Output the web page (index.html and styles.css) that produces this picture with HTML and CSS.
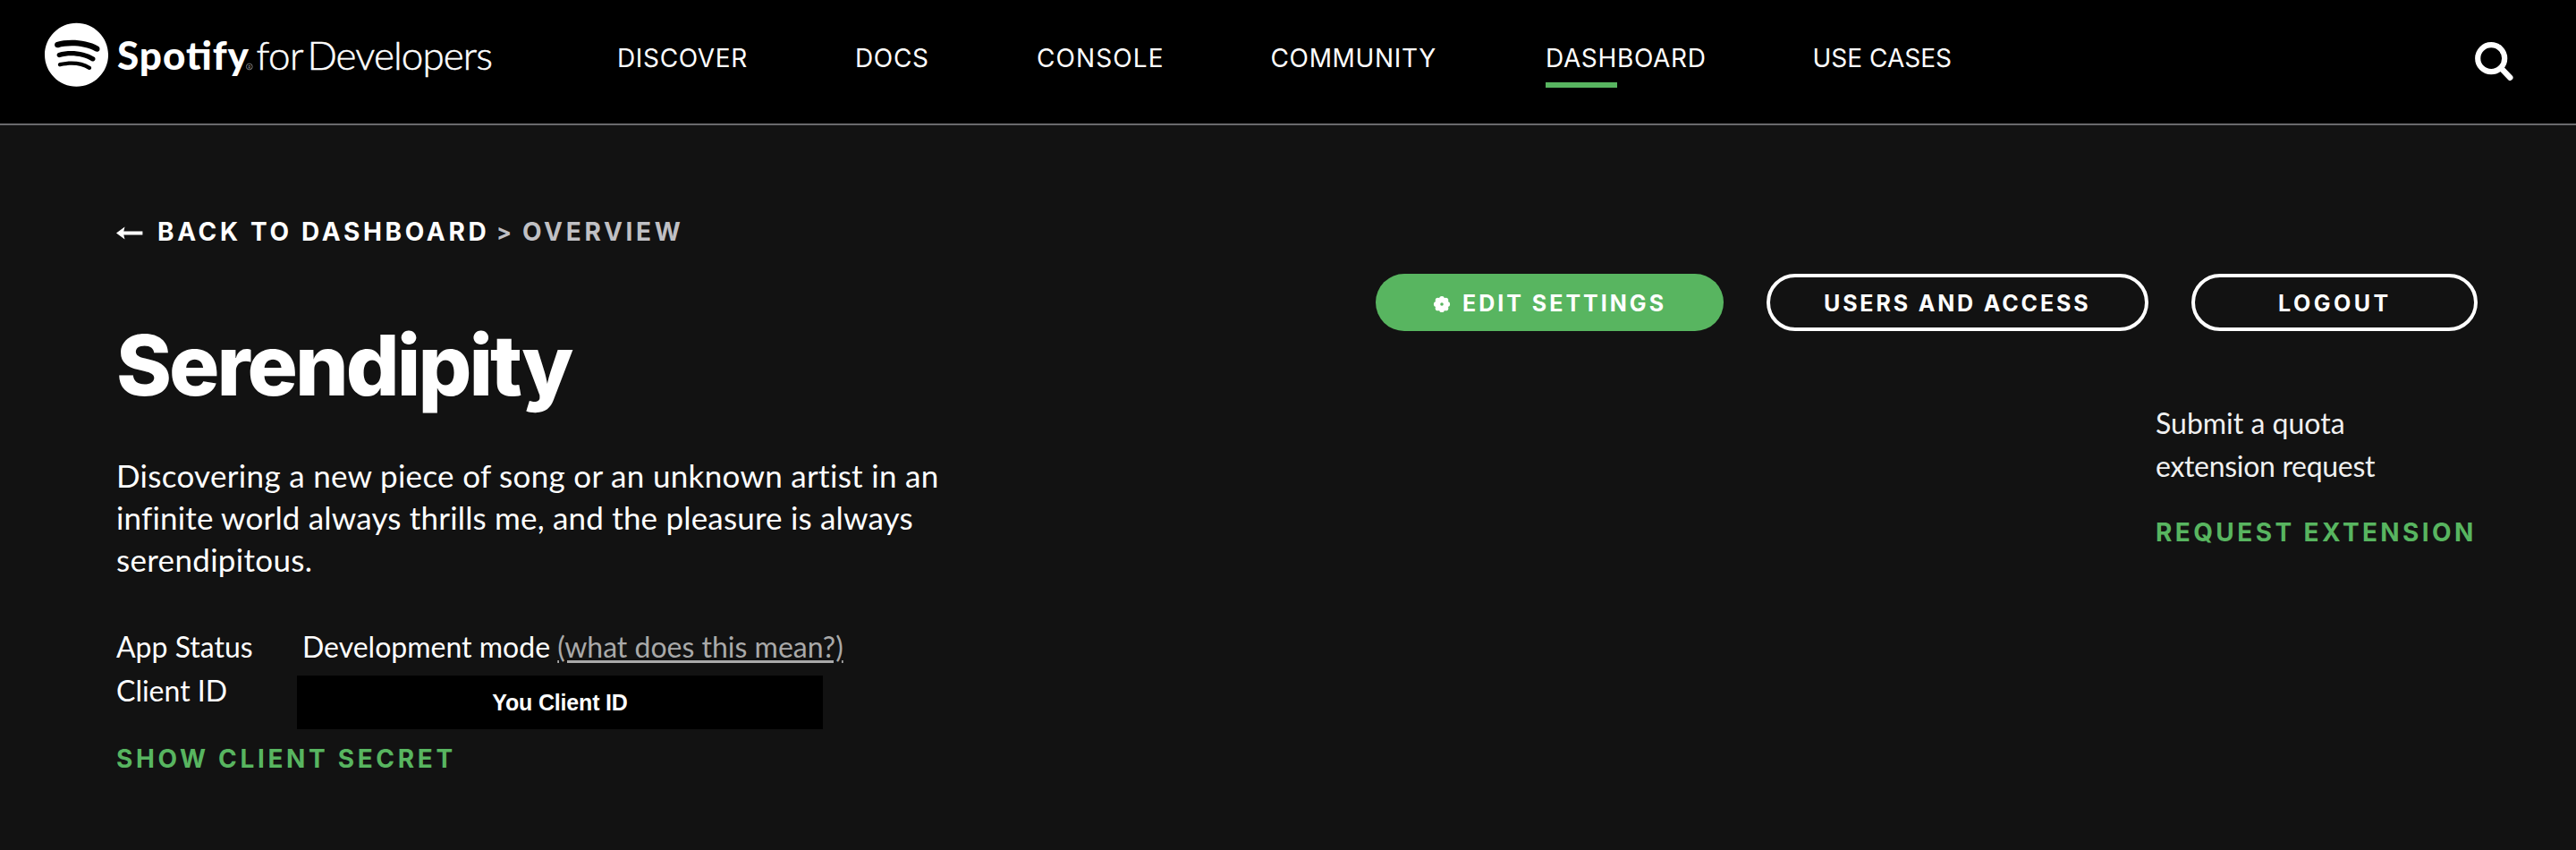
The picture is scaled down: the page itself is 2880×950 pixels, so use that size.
FILE: index.html
```html
<!DOCTYPE html>
<html lang="en">
<head>
<meta charset="utf-8">
<title>Serendipity - Spotify for Developers</title>
<link rel="stylesheet" href="styles.css">
</head>
<body>
<header class="header">
  <a class="logo">
    <svg width="510" height="76" viewBox="0 0 510 76">
      <circle cx="35.4" cy="35.5" r="30" fill="#000"/>
      <path transform="translate(0 .7) scale(2.96)" fill="#fff" d="M12 0C5.4 0 0 5.4 0 12s5.4 12 12 12 12-5.4 12-12S18.66 0 12 0zm5.521 17.34c-.24.359-.66.48-1.021.24-2.82-1.74-6.36-2.101-10.561-1.141-.418.122-.779-.179-.899-.539-.12-.421.18-.78.54-.9 4.56-1.021 8.52-.6 11.64 1.32.42.18.479.659.301 1.02zm1.44-3.3c-.301.42-.841.6-1.262.3-3.239-1.98-8.159-2.58-11.939-1.38-.479.12-1.02-.12-1.14-.6-.12-.48.12-1.021.6-1.141C9.6 9.9 15 10.561 18.72 12.84c.361.181.54.78.241 1.2zm.12-3.36C15.24 8.4 8.82 8.16 5.16 9.301c-.6.179-1.2-.181-1.38-.721-.18-.601.18-1.2.72-1.381 4.26-1.26 11.28-1.02 15.721 1.621.539.3.719 1.02.419 1.56-.299.421-1.02.599-1.559.3z"/>
      <text class="logo-bold" x="81" y="53" textLength="147">Spotify</text>
      <circle cx="228.8" cy="49.5" r="3.4" fill="none" stroke="#777" stroke-width="1"/>
      <text class="logo-reg" x="227.2" y="51.7">R</text>
      <text class="logo-light" x="236.6" y="53" textLength="53">for</text>
      <text class="logo-light" x="293.4" y="53" textLength="207.5">Developers</text>
    </svg>
  </a>
  <nav class="nav">
    <a class="nav-item">DISCOVER</a>
    <a class="nav-item">DOCS</a>
    <a class="nav-item nav-wide">CONSOLE</a>
    <a class="nav-item">COMMUNITY</a>
    <a class="nav-item active">DASHBOARD</a>
    <a class="nav-item nav-tight">USE CASES</a>
  </nav>
  <svg class="search" width="44" height="44" viewBox="0 0 44 44" fill="none" stroke="#fff">
    <circle cx="18.2" cy="18.2" r="15" stroke-width="6.2"/>
    <path d="M29 29l10.3 10.8" stroke-width="6.4" stroke-linecap="round"/>
  </svg>
</header>
<main class="main">
  <section class="details">
    <div class="crumbs">
      <svg class="arrow" width="30" height="16" viewBox="0 0 30 16" fill="#fff"><path d="M0 8.5L9.5 1.5 8.3 6.5H29.4V10.5H8.3L9.5 15.5z"/></svg>
      <a class="crumb-back">BACK TO DASHBOARD</a>
      <span class="crumb-sep">&gt;</span>
      <span class="crumb-here">OVERVIEW</span>
    </div>
    <h1 class="title">Serendipity</h1>
    <p class="desc">Discovering a new piece of song or an unknown artist in an<br><span class="desc-tight">infinite world always thrills me, and the pleasure is always</span><br>serendipitous.</p>
    <dl class="facts">
      <dt>App Status</dt>
      <dd class="mode">Development mode <a class="what">(what does this mean?)</a></dd>
      <dt>Client ID</dt>
      <dd class="client-id">You Client ID</dd>
    </dl>
    <a class="link secret">SHOW CLIENT SECRET</a>
  </section>
  <aside class="side">
    <div class="buttons">
      <a class="btn btn-green">
        <svg class="gear" width="20" height="20" viewBox="-10 -10 20 20">
          <g fill="#fff"><circle r="7"/><circle cy="-6.2" r="2.9"/><circle cy="6.2" r="2.9"/><circle cx="-6.2" r="2.9"/><circle cx="6.2" r="2.9"/><circle cx="4.4" cy="4.4" r="2.9"/><circle cx="-4.4" cy="4.4" r="2.9"/><circle cx="4.4" cy="-4.4" r="2.9"/><circle cx="-4.4" cy="-4.4" r="2.9"/></g>
          <circle r="1.8" fill="#58b560"/>
        </svg>
        <span>EDIT SETTINGS</span>
      </a>
      <a class="btn btn-users">USERS AND ACCESS</a>
      <a class="btn btn-logout">LOGOUT</a>
    </div>
    <div class="quota">
      <p class="quota-text">Submit a quota<br><span class="quota-second">extension request</span></p>
      <a class="link request">REQUEST EXTENSION</a>
    </div>
  </aside>
</main>
</body>
</html>
```
FILE: styles.css
```css
* { box-sizing: border-box; }
body {
  margin: 0;
  height: 950px;
  background: #121212;
  color: #fff;
  font-family: Lato, "Liberation Sans", sans-serif;
  font-size: 32px;
}
h1, p, dl, dd { margin: 0; }

.header {
  display: flex;
  align-items: flex-start;
  height: 140px;
  padding-left: 50px;
  padding-right: 69px;
  background: #000;
  border-bottom: 2px solid #6a6a6c;
}
.logo { width: 640px; padding-top: 25px; }
.logo svg { display: block; }
.logo text { fill: #fff; font-family: Lato, sans-serif; font-size: 44px; }
.logo .logo-bold { font-weight: 900; }
.logo .logo-light { font-weight: 300; stroke: #fff; stroke-width: .5px; }
.logo .logo-reg { font-size: 5px; fill: #999; }

.nav {
  display: grid;
  grid-template-columns: 266px 203px 261.5px 307.5px 298.5px 200px;
  padding-top: 48px;
  font: 28px/34px Inter, sans-serif;
  letter-spacing: .65px;
}
.nav-wide { letter-spacing: 1.1px; }
.nav-tight { letter-spacing: 0; }
.active::after {
  content: "";
  display: block;
  width: 80px;
  height: 6px;
  margin-top: 10px;
  background: #58b560;
}
.search { margin-left: auto; margin-top: 46.5px; }

.main {
  display: flex;
  justify-content: space-between;
  padding-left: 130px;
  padding-right: 110px;
}
.details { padding-top: 102px; }
.crumbs {
  display: flex;
  align-items: center;
  height: 34px;
  font: 700 28px/34px Inter, sans-serif;
  letter-spacing: 3.67px;
}
.arrow { margin-top: 2px; }
.crumb-back { width: 379px; margin-left: 16px; }
.crumb-sep { width: 29px; color: #c0c0c4; font-size: 25px; }
.crumb-here { color: #c0c0c4; }
.title {
  margin-top: 74px;
  font: 800 94px/116px Inter, sans-serif;
  letter-spacing: -2.95px;
}
.desc {
  margin-top: 42px;
  font-size: 35px;
  line-height: 47px;
  letter-spacing: .31px;
}
.desc-tight { letter-spacing: .18px; }
.facts {
  display: grid;
  grid-template-columns: 202px auto;
  justify-content: start;
  margin-top: 49px;
  line-height: 49px;
}
.facts dt { height: 49px; }
.mode { padding-left: 6px; }
.what {
  color: #a9a9a9;
  text-decoration: underline;
  text-decoration-thickness: 3px;
  text-underline-offset: 3px;
}
.client-id {
  width: 588px;
  height: 60px;
  margin-top: 8px;
  background: #000;
  text-align: center;
  font: 700 25px/60px "Liberation Sans", sans-serif;
  letter-spacing: -.17px;
}
.link {
  display: block;
  font: 700 28px/34px Inter, sans-serif;
  color: #58b560;
}
.secret { margin-top: 16px; letter-spacing: 3.65px; }

.side { width: 1232px; padding-top: 166px; }
.buttons { display: flex; gap: 48px; }
.btn {
  display: flex;
  align-items: center;
  height: 64px;
  padding-top: 2px;
  border-radius: 32px;
  font: 700 25px/30px Inter, sans-serif;
}
.btn-green {
  width: 389px;
  padding-left: 64px;
  background: #58b560;
  letter-spacing: 3px;
}
.gear { margin-top: 1px; margin-right: 13px; }
.btn-users {
  width: 427px;
  padding-left: 60px;
  border: 4px solid #fff;
  letter-spacing: 2.85px;
}
.btn-logout {
  width: 320px;
  padding-left: 93px;
  border: 4px solid #fff;
  letter-spacing: 3.5px;
}
.quota { margin-top: 79px; margin-left: 872px; color: #f0f0f0; }
.quota-text { line-height: 48px; }
.quota-second { letter-spacing: -.31px; }
.request { margin-top: 33px; letter-spacing: 3.4px; }
```
